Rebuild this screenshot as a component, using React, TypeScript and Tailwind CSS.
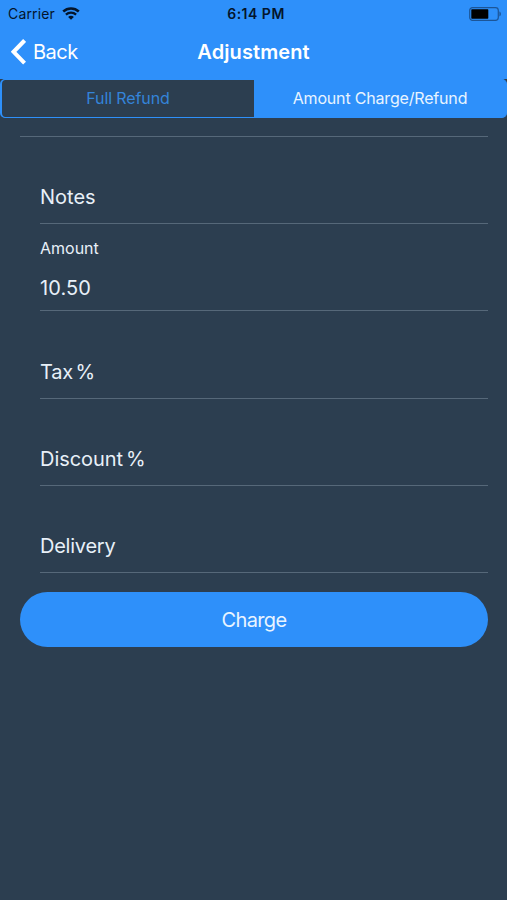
import { useState } from "react";

type Field = {
  id: string;
  label: string;
  value?: string;
  tracking?: string;
};

const fields: Field[] = [
  { id: "notes", label: "Notes" },
  { id: "amount", label: "Amount", value: "10.50" },
  { id: "tax", label: "Tax %", tracking: "tracking-[-0.2px] [word-spacing:-3px]" },
  { id: "discount", label: "Discount %", tracking: "tracking-[-0.05px] [word-spacing:-2.5px]" },
  { id: "delivery", label: "Delivery", tracking: "tracking-[-0.25px]" },
];

function WifiIcon() {
  return (
    <svg width="18" height="13" viewBox="0 0 18 13" fill="none">
      <path d="M1.2 4.5C5.6 0.4 12.4 0.4 16.8 4.5" stroke="#04152b" strokeWidth="2.5" />
      <path d="M3.9 7.6C6.8 5 11.2 5 14.1 7.6" stroke="#04152b" strokeWidth="2.3" />
      <path d="M9 12.8L6.1 9.9C7.7 8.5 10.3 8.5 11.9 9.9L9 12.8Z" fill="#04152b" />
    </svg>
  );
}

function BatteryIcon() {
  return (
    <svg width="33" height="14" viewBox="0 0 33 14" fill="none">
      <rect x="0.7" y="0.7" width="28.6" height="12.6" rx="2.8" stroke="#1c5597" strokeWidth="1.2" />
      <rect x="2.3" y="2.3" width="17" height="9.4" rx="0.6" fill="#000000" />
      <path d="M30.4 4.6C32.4 5.2 32.4 8.8 30.4 9.4Z" fill="#1c5597" />
    </svg>
  );
}

function StatusBar() {
  return (
    <div className="grid h-[27px] grid-cols-3 items-center pr-[5px] pl-2 text-[#04152b]">
      <div className="flex items-center gap-[7px]">
        <span className="text-[14px] tracking-[0.15px]">Carrier</span>
        <WifiIcon />
      </div>
      <span className="pl-0.5 text-center text-[14px] font-semibold tracking-[0.5px]">6:14 PM</span>
      <div className="flex justify-end">
        <BatteryIcon />
      </div>
    </div>
  );
}

function NavBar() {
  return (
    <div className="grid h-[50px] grid-cols-[1fr_auto_1fr] items-center text-white">
      <button
        type="button"
        className="flex items-center gap-[7px] pl-[11px] text-[20px] tracking-[-0.5px]"
      >
        <svg width="15" height="26" viewBox="0 0 15 26" fill="none">
          <path d="M13.6 1.4L2.6 12.8L13.6 24.2" stroke="#ffffff" strokeWidth="4.1" />
        </svg>
        Back
      </button>
      <h1 className="text-[20px] font-semibold tracking-[0.1px]">Adjustment</h1>
    </div>
  );
}

function FieldRow({ id, label, value, tracking }: Field) {
  if (value !== undefined) {
    return (
      <div className="flex h-[87.2px] flex-col border-b border-[#566879] pt-3">
        <label htmlFor={id} className="text-[16px] leading-6">
          {label}
        </label>
        <input
          id={id}
          defaultValue={value}
          className="mt-[14px] h-7 w-full bg-transparent text-[20px] tracking-[0.1px] outline-none"
        />
      </div>
    );
  }

  return (
    <div className="flex h-[87.2px] items-end border-b border-[#566879] pb-3">
      <span className={`text-[20px] leading-7 ${tracking ?? ""}`}>{label}</span>
    </div>
  );
}

export default function App() {
  const [tab, setTab] = useState<"full" | "amount">("amount");

  const tabClass = (active: boolean) =>
    active
      ? "flex-1 bg-[#2e90fa] pb-0.5 text-[#e8f4ff] tracking-[-0.18px]"
      : "flex-1 rounded-l-[3px] bg-[#2c3e50] pb-0.5 text-[#3484d9] tracking-[-0.1px]";

  return (
    <main className="flex h-[900px] w-[507px] flex-col bg-[#2c3e50] font-[Inter,sans-serif] text-[#e8f0f8]">
      <header className="h-[79px] bg-[#2e90fa]">
        <StatusBar />
        <NavBar />
      </header>

      <div className="flex h-[39px] overflow-hidden rounded-[5px] border border-l-2 border-[#2e90fa] bg-[#2e90fa] text-[16px]">
        <button type="button" className={tabClass(tab === "full")} onClick={() => setTab("full")}>
          Full Refund
        </button>
        <button type="button" className={tabClass(tab === "amount")} onClick={() => setTab("amount")}>
          Amount Charge/Refund
        </button>
      </div>

      <div className="mt-[18px] ml-5 mr-[19px] border-t border-[#566879] pl-5">
        {fields.map((field) => (
          <FieldRow key={field.id} {...field} />
        ))}
      </div>

      <button
        type="button"
        className="mt-[19px] ml-5 mr-[19px] h-[55px] rounded-full bg-[#2e90fa] pt-0.5 text-[20px] tracking-[-0.6px] text-[#e8f4ff]"
      >
        Charge
      </button>
    </main>
  );
}
